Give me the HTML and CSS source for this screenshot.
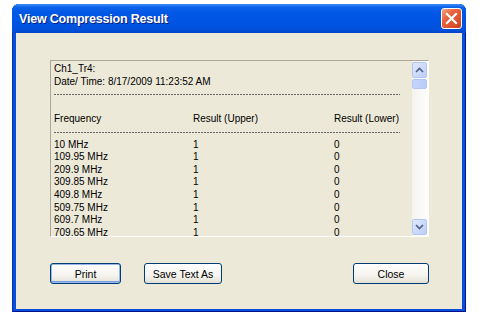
FILE: index.html
```html
<!DOCTYPE html>
<html lang="en">
<head>
    <meta charset="UTF-8">
    <title>View Compression Result</title>
    <link rel="stylesheet" href="styles.css">
</head>
<body>
    <div class="window">
        <!-- Title bar -->
        <div class="titlebar">
            <span class="title">View Compression Result</span>
            <div class="close-x">
                <svg width="13" height="13" viewBox="0 0 13 13">
                    <path d="M2 2 L11 11 M11 2 L2 11" stroke="#fff" stroke-width="2.2" stroke-linecap="square"/>
                </svg>
            </div>
        </div>

        <div class="client">
            <!-- Result text -->
            <div class="listbox">
                <div class="text">
                    <div class="line">Ch1_Tr4:</div>
                    <div class="line">Date/ Time: 8/17/2009 11:23:52 AM</div>
                    <div class="line dashes"></div>
                    <div class="line"></div>
                    <div class="row"><span>Frequency</span><span>Result (Upper)</span><span>Result (Lower)</span></div>
                    <div class="line dashes"></div>
                    <div class="row"><span>10 MHz</span><span>1</span><span>0</span></div>
                    <div class="row"><span>109.95 MHz</span><span>1</span><span>0</span></div>
                    <div class="row"><span>209.9 MHz</span><span>1</span><span>0</span></div>
                    <div class="row"><span>309.85 MHz</span><span>1</span><span>0</span></div>
                    <div class="row"><span>409.8 MHz</span><span>1</span><span>0</span></div>
                    <div class="row"><span>509.75 MHz</span><span>1</span><span>0</span></div>
                    <div class="row"><span>609.7 MHz</span><span>1</span><span>0</span></div>
                    <div class="row"><span>709.65 MHz</span><span>1</span><span>0</span></div>
                </div>
                <div class="scrollbar">
                    <div class="sb-btn">
                        <svg width="9" height="6" viewBox="0 0 9 6"><path d="M1 5 L4.5 1.5 L8 5" fill="none" stroke="#4d6185" stroke-width="1.6"/></svg>
                    </div>
                    <div class="sb-thumb"></div>
                    <div class="sb-track"></div>
                    <div class="sb-btn">
                        <svg width="9" height="6" viewBox="0 0 9 6"><path d="M1 1 L4.5 4.5 L8 1" fill="none" stroke="#4d6185" stroke-width="1.6"/></svg>
                    </div>
                </div>
            </div>

            <!-- Buttons -->
            <div class="buttons">
                <button class="btn default">Print</button>
                <button class="btn save">Save Text As</button>
                <button class="btn close">Close</button>
            </div>
        </div>
    </div>
</body>
</html>
```

FILE: styles.css
```css
/* Page */
body {
    margin: 0;
    padding: 0;
    background: #fff;
    font-family: "Liberation Sans", Arial, sans-serif;
}

/* Window frame */
.window {
    margin: 4px 0 0 12px;
    width: 454px;
    height: 308px;
    border-radius: 7px 7px 0 0;
    background: #0a4fdc;
    display: flex;
    flex-direction: column;
    box-shadow: inset 1px 0 0 #0831a8, inset -1px 0 0 #00138c, inset 0 -1px 0 #00138c;
}

/* Title bar */
.titlebar {
    height: 29px;
    flex-shrink: 0;
    display: flex;
    align-items: center;
    justify-content: space-between;
    padding: 0 4px 0 7px;
    border-radius: 7px 7px 0 0;
    background: linear-gradient(to bottom, #3d8cf6 0%, #0a62ea 12%, #0057e6 30%, #0054e3 60%, #0150dc 88%, #0346c8 100%);
}

.title {
    color: #fff;
    font-weight: bold;
    font-size: 12.5px;
    letter-spacing: -0.2px;
    text-shadow: 1px 1px 0 #0a1f80;
}

.close-x {
    width: 19px;
    height: 19px;
    border: 1px solid #fff;
    border-radius: 3px;
    background: linear-gradient(to bottom right, #f4a48a 0%, #e8643f 35%, #d9502c 75%, #c2401c 100%);
    display: flex;
    align-items: center;
    justify-content: center;
}

/* Client area */
.client {
    flex: 1;
    margin: 0 4px 3px 4px;
    background: #ece9d8;
    padding: 27px 0 0 34px;
}

.listbox {
    width: 377px;
    height: 175px;
    border: 1px solid;
    border-color: #aca899 #fff #fff #aca899;
    display: flex;
}

.text {
    flex: 1;
    overflow: hidden;
    padding: 2px 0 0 3px;
    font-size: 10px;
    line-height: 12.6px;
    color: #000;
}

.line {
    height: 12.6px;
    white-space: nowrap;
}

.dashes {
    width: 346px;
    background: repeating-linear-gradient(to right, #666 0 2px, transparent 2px 3px) no-repeat 0 6px / 346px 1px;
}

.row {
    display: grid;
    grid-template-columns: 139px 141px auto;
    height: 12.6px;
    white-space: nowrap;
}

/* Scrollbar */
.scrollbar {
    width: 16px;
    display: flex;
    flex-direction: column;
    padding: 1px 0;
    background: linear-gradient(to right, #f4f3ee, #fefefe);
}

.sb-btn {
    height: 14px;
    margin: 0 1px 0 0;
    border: 1px solid #b3c6f3;
    border-radius: 2px;
    background: linear-gradient(to bottom right, #dfe8fe, #bccdf9);
    display: flex;
    align-items: center;
    justify-content: center;
}

.sb-thumb {
    height: 8px;
    margin: 1px 1px 0 0;
    border: 1px solid #b3c6f3;
    border-radius: 2px;
    background: linear-gradient(to right, #c6d5fc, #b9cbf7);
}

.sb-track {
    flex: 1;
}

/* Buttons */
.buttons {
    display: flex;
    width: 379px;
    margin-top: 26px;
}

.btn {
    height: 21px;
    padding: 0;
    border: 1px solid #003c74;
    border-radius: 3px;
    background: linear-gradient(to bottom, #ffffff 0%, #f4f3ee 60%, #e3e0d5 100%);
    font-family: "Liberation Sans", Arial, sans-serif;
    font-size: 10.5px;
    color: #000;
}

.btn.default {
    width: 71px;
    box-shadow: inset 0 0 0 1px #98b8ea, inset 0 -1px 0 1px #7b9ee3;
}

.btn.save {
    width: 78px;
    margin-left: 23px;
}

.btn.close {
    width: 76px;
    margin-left: auto;
}
```
